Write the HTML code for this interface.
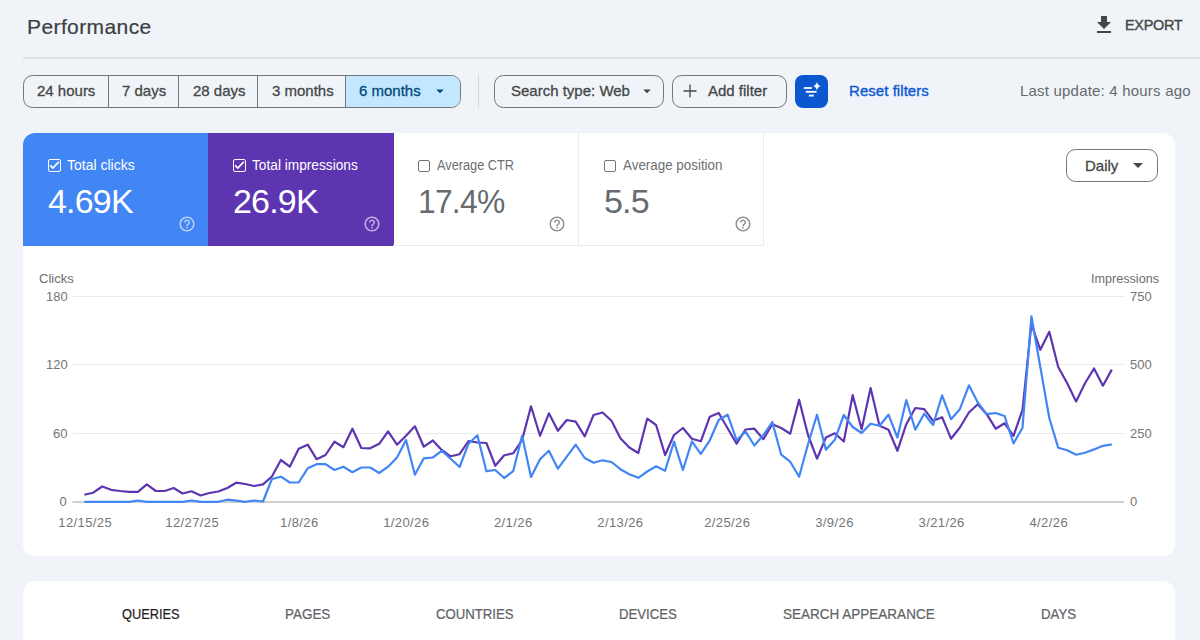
<!DOCTYPE html>
<html>
<head>
<meta charset="utf-8">
<style>
html, body { margin: 0; padding: 0; }
body { width: 1200px; height: 640px; overflow: hidden; position: relative; background: #f0f4f9; font-family: "Liberation Sans", sans-serif; color: #1f1f1f; }
.abs { position: absolute; }
.t { position: absolute; white-space: nowrap; line-height: 1; }
.title { left: 27px; top: 16px; font-size: 21px; letter-spacing: 0.4px; -webkit-text-stroke: 0.2px currentColor; color: #3c4043; }
.export { left: 1125px; top: 17px; font-size: 15.5px; letter-spacing: -0.3px; -webkit-text-stroke: 0.4px currentColor; color: #444746; transform: scaleX(0.93); transform-origin: 0 0; }
.divider { left: 23px; top: 57px; width: 1177px; height: 2px; background: #dde1e5; }
.sg { top: 0; height: 31px; box-sizing: border-box; }
.lbl { -webkit-text-stroke: 0.3px currentColor; }
.sg .lbl { position: absolute; top: 6.6px; font-size: 15px; color: #444746; white-space: nowrap; line-height: 1; }
.btn { top: 75px; height: 33px; box-sizing: border-box; border: 1px solid #747775; border-radius: 9.5px; }
.btn .lbl { position: absolute; top: 6.6px; font-size: 15px; color: #444746; white-space: nowrap; line-height: 1; }
.card { background: #fff; border-radius: 12px; }
.tile { top: 133px; height: 113px; box-sizing: border-box; }
.tile .cb { position: absolute; left: 25px; top: 26px; width: 12.7px; height: 12.9px; box-sizing: border-box; border: 1.5px solid #fff; border-radius: 2px; }
.tile .lab { position: absolute; left: 44px; top: 25.4px; font-size: 14px; white-space: nowrap; line-height: 1; }
.tile .val { position: absolute; left: 25px; top: 50.5px; font-size: 34px; letter-spacing: -0.8px; white-space: nowrap; line-height: 1; }
.tile .help { position: absolute; left: 155px; top: 82.3px; width: 18px; height: 18px; }
.ax { position: absolute; font-size: 13px; color: #757575; white-space: nowrap; line-height: 1; }
.xl { transform: translateX(-50%); letter-spacing: 0.4px; }
.tab { position: absolute; top: 607px; font-size: 14px; -webkit-text-stroke: 0.22px currentColor; transform-origin: 0 0; color: #5f6368; white-space: nowrap; line-height: 1; }
</style>
</head>
<body>
<!-- Header -->
<div class="t title">Performance</div>
<svg class="abs" style="left:1092px;top:12.7px" width="24" height="24" viewBox="0 0 24 24"><path fill="#444746" d="M19 9h-4V3H9v6H5l7 7 7-7zM5 18v2h14v-2H5z"/></svg>
<div class="t export">EXPORT</div>
<div class="abs divider"></div>

<!-- Date range segmented buttons -->
<div class="abs" style="left:23px;top:75px;width:438px;height:33px;box-sizing:border-box;border:1px solid #747775;border-radius:9.5px;overflow:hidden">
  <div class="abs sg" style="left:0;width:84px;"><span class="lbl" style="left:13px">24 hours</span></div>
  <div class="abs sg" style="left:84px;width:70px;border-left:1px solid #747775;"><span class="lbl" style="left:13px">7 days</span></div>
  <div class="abs sg" style="left:154px;width:79px;border-left:1px solid #747775;"><span class="lbl" style="left:14px">28 days</span></div>
  <div class="abs sg" style="left:233px;width:88px;border-left:1px solid #747775;"><span class="lbl" style="left:14px">3 months</span></div>
  <div class="abs sg" style="left:321px;width:117px;border-left:1px solid #747775;background:#c2e7ff;"><span class="lbl" style="left:13px;color:#004a77">6 months</span>
    <svg class="abs" style="left:85px;top:6px" width="18" height="18" viewBox="0 0 24 24"><path fill="#004a77" d="M7 10l5 5 5-5z"/></svg></div>
</div>
<div class="abs" style="left:478px;top:75px;width:1px;height:33px;background:#d3d7dc"></div>

<div class="abs btn" style="left:494px;width:170px;"><span class="lbl" style="left:16px">Search type: Web</span>
  <svg class="abs" style="left:143px;top:6px" width="18" height="18" viewBox="0 0 24 24"><path fill="#444746" d="M7 10l5 5 5-5z"/></svg></div>
<div class="abs btn" style="left:672px;width:115px;"><svg class="abs" style="left:4px;top:2px" width="26" height="26" viewBox="0 0 24 24"><path fill="#444746" d="M18 12.6h-5.4V18h-1.2v-5.4H6v-1.2h5.4V6h1.2v5.4H18z"/></svg><span class="lbl" style="left:35px">Add filter</span></div>
<div class="abs" style="left:795px;top:75px;width:33px;height:33px;border-radius:8px;background:#0b57d0;">
  <svg class="abs" style="left:0;top:0" width="33" height="33" viewBox="0 0 33 33">
    <rect x="8.8" y="12.1" width="8.1" height="1.8" fill="#fff"/>
    <rect x="10.8" y="15.9" width="10.8" height="1.8" fill="#fff"/>
    <rect x="13.9" y="19.7" width="4.8" height="1.8" fill="#fff"/>
    <path fill="#fff" d="M21.9 6.9 Q22.7 10.3 26.0 11.1 Q22.7 11.9 21.9 15.3 Q21.1 11.9 17.8 11.1 Q21.1 10.3 21.9 6.9z"/>
  </svg>
</div>
<div class="t" style="left:849px;top:83.3px;font-size:15px;color:#0b57d0;-webkit-text-stroke:0.35px currentColor;letter-spacing:0.05px">Reset filters</div>
<div class="t" style="left:1020px;top:83.3px;font-size:15px;color:#66696d;letter-spacing:0.2px">Last update: 4 hours ago</div>

<!-- Main card -->
<div class="abs card" style="left:23px;top:133px;width:1152px;height:423px;overflow:hidden">
</div>
<div class="abs tile" style="left:23px;width:186px;background:#4285f4;border-top-left-radius:12px">
  <div class="cb"></div>
  <svg class="abs" style="left:25px;top:26px" width="13" height="13" viewBox="0 0 13 13"><path d="M2.1 6.4 L4.8 9.0 L10.8 2.9" stroke="#fff" stroke-width="1.7" fill="none"/></svg>
  <div class="lab" style="color:#fff">Total clicks</div>
  <div class="val" style="color:#fff">4.69K</div>
  <svg class="help" viewBox="0 0 24 24"><path fill="rgba(255,255,255,0.62)" d="M11 18h2v-2h-2v2zm1-16C6.48 2 2 6.48 2 12s4.48 10 10 10 10-4.48 10-10S17.52 2 12 2zm0 18c-4.41 0-8-3.59-8-8s3.59-8 8-8 8 3.59 8 8-3.59 8-8 8zm0-14c-2.21 0-4 1.79-4 4h2c0-1.1.9-2 2-2s2 .9 2 2c0 2-3 1.75-3 5h2c0-2.25 3-2.5 3-5 0-2.21-1.79-4-4-4z"/></svg>
</div>
<div class="abs tile" style="left:208px;width:186px;background:#5e35b1">
  <div class="cb"></div>
  <svg class="abs" style="left:25px;top:26px" width="13" height="13" viewBox="0 0 13 13"><path d="M2.1 6.4 L4.8 9.0 L10.8 2.9" stroke="#fff" stroke-width="1.7" fill="none"/></svg>
  <div class="lab" style="color:#fff;transform:scaleX(0.978);transform-origin:0 0">Total impressions</div>
  <div class="val" style="color:#fff">26.9K</div>
  <svg class="help" viewBox="0 0 24 24"><path fill="rgba(255,255,255,0.62)" d="M11 18h2v-2h-2v2zm1-16C6.48 2 2 6.48 2 12s4.48 10 10 10 10-4.48 10-10S17.52 2 12 2zm0 18c-4.41 0-8-3.59-8-8s3.59-8 8-8 8 3.59 8 8-3.59 8-8 8zm0-14c-2.21 0-4 1.79-4 4h2c0-1.1.9-2 2-2s2 .9 2 2c0 2-3 1.75-3 5h2c0-2.25 3-2.5 3-5 0-2.21-1.79-4-4-4z"/></svg>
</div>
<div class="abs tile" style="left:393px;width:186px;border-right:1px solid #ebebeb;border-bottom:1px solid #ebebeb">
  <div class="cb" style="border-color:#757575;border-width:1px;width:12.2px;height:12.2px;top:26.5px"></div>
  <div class="lab" style="color:#6c6f73;transform:scaleX(0.91);transform-origin:0 0">Average CTR</div>
  <div class="val" style="color:#676b6f;letter-spacing:-0.8px;transform:scaleX(0.935);transform-origin:0 0">17.4%</div>
  <svg class="help" viewBox="0 0 24 24"><path fill="#8f9296" d="M11 18h2v-2h-2v2zm1-16C6.48 2 2 6.48 2 12s4.48 10 10 10 10-4.48 10-10S17.52 2 12 2zm0 18c-4.41 0-8-3.59-8-8s3.59-8 8-8 8 3.59 8 8-3.59 8-8 8zm0-14c-2.21 0-4 1.79-4 4h2c0-1.1.9-2 2-2s2 .9 2 2c0 2-3 1.75-3 5h2c0-2.25 3-2.5 3-5 0-2.21-1.79-4-4-4z"/></svg>
</div>
<div class="abs tile" style="left:578px;width:186px;border-left:1px solid #ebebeb;border-right:1px solid #ebebeb;border-bottom:1px solid #ebebeb">
  <div class="cb" style="border-color:#757575;border-width:1px;width:12.2px;height:12.2px;top:26.5px"></div>
  <div class="lab" style="color:#6c6f73;transform:scaleX(0.956);transform-origin:0 0">Average position</div>
  <div class="val" style="color:#676b6f">5.5</div>
  <svg class="help" viewBox="0 0 24 24"><path fill="#8f9296" d="M11 18h2v-2h-2v2zm1-16C6.48 2 2 6.48 2 12s4.48 10 10 10 10-4.48 10-10S17.52 2 12 2zm0 18c-4.41 0-8-3.59-8-8s3.59-8 8-8 8 3.59 8 8-3.59 8-8 8zm0-14c-2.21 0-4 1.79-4 4h2c0-1.1.9-2 2-2s2 .9 2 2c0 2-3 1.75-3 5h2c0-2.25 3-2.5 3-5 0-2.21-1.79-4-4-4z"/></svg>
</div>

<!-- Daily dropdown -->
<div class="abs btn" style="left:1066px;top:149px;width:92px;height:33px;"><span class="lbl" style="left:18px;top:7.5px">Daily</span>
  <svg class="abs" style="left:59px;top:3px" width="24" height="24" viewBox="0 0 24 24"><path fill="#444746" d="M7 10l5 5 5-5z"/></svg></div>

<!-- Chart -->
<div class="ax" style="left:39px;top:272px;color:#6b6e72">Clicks</div>
<div class="ax" style="left:1090.5px;top:272px;color:#6b6e72;transform:scaleX(0.97);transform-origin:0 0">Impressions</div>
<svg class="abs" style="left:0;top:0" width="1200" height="640">
  <line x1="72.5" y1="296.5" x2="1124" y2="296.5" stroke="#ebebeb" stroke-width="1"/>
  <line x1="72.5" y1="364.5" x2="1124" y2="364.5" stroke="#ebebeb" stroke-width="1"/>
  <line x1="72.5" y1="433.5" x2="1124" y2="433.5" stroke="#ebebeb" stroke-width="1"/>
  <line x1="72.5" y1="502" x2="1124" y2="502" stroke="#d0d0d0" stroke-width="2"/>
  <polyline fill="none" stroke="#5e35b1" stroke-width="2.2" stroke-linejoin="round" points="84.3,494.8 93.2,492.7 102.2,486.5 111.1,489.8 120.0,491.0 129.0,491.8 137.9,491.8 146.8,484.3 155.8,491.0 164.7,491.0 173.7,488.0 182.6,493.5 191.5,491.3 200.5,495.5 209.4,493.0 218.3,491.5 227.3,488.0 236.2,482.7 245.1,484.0 254.1,486.0 263.0,484.3 271.9,476.5 280.9,460.0 289.8,466.7 298.7,448.7 307.7,444.7 316.6,459.2 325.5,455.0 334.5,441.7 343.4,447.2 352.4,428.7 361.3,448.0 370.2,448.3 379.2,443.8 388.1,431.3 397.0,444.7 406.0,435.8 414.9,426.3 423.8,446.7 432.8,440.5 441.7,450.0 450.6,456.3 459.6,454.2 468.5,441.0 477.4,442.5 486.4,443.0 495.3,465.8 504.2,455.3 513.2,453.3 522.1,440.0 531.0,406.3 540.0,435.8 548.9,413.3 557.9,430.8 566.8,420.0 575.7,421.7 584.7,436.3 593.6,415.0 602.5,412.5 611.5,420.8 620.4,438.3 629.3,447.5 638.3,453.0 647.2,418.7 656.1,425.0 665.1,455.0 674.0,435.0 682.9,428.0 691.9,438.7 700.8,441.3 709.8,416.7 718.7,413.0 727.6,428.3 736.6,443.7 745.5,429.5 754.4,428.7 763.4,439.2 772.3,424.2 781.2,428.0 790.2,433.7 799.1,399.7 808.0,435.0 817.0,458.7 825.9,437.5 834.8,433.3 843.8,441.5 852.7,395.0 861.6,429.2 870.6,388.0 879.5,425.8 888.5,429.7 897.4,450.8 906.3,424.2 915.3,408.0 924.2,409.2 933.1,420.8 942.1,417.2 951.0,438.7 959.9,427.5 968.9,412.5 977.8,404.2 986.7,414.2 995.7,428.7 1004.6,423.3 1013.5,435.8 1022.5,409.8 1031.4,324.0 1040.3,349.8 1049.3,331.8 1058.2,367.0 1067.2,383.2 1076.1,401.4 1085.0,383.2 1094.0,368.5 1102.9,385.7 1111.8,369.6"/>
  <polyline fill="none" stroke="#4285f4" stroke-width="2.2" stroke-linejoin="round" points="84.3,501.8 93.2,501.8 102.2,501.8 111.1,501.8 120.0,501.8 129.0,501.8 137.9,500.5 146.8,501.8 155.8,501.8 164.7,501.8 173.7,501.8 182.6,501.8 191.5,500.5 200.5,501.8 209.4,501.8 218.3,501.8 227.3,499.7 236.2,500.7 245.1,501.8 254.1,500.5 263.0,501.5 271.9,479.0 280.9,476.7 289.8,482.5 298.7,482.5 307.7,468.3 316.6,464.2 325.5,464.2 334.5,470.0 343.4,466.7 352.4,472.2 361.3,467.5 370.2,467.5 379.2,473.0 388.1,466.7 397.0,457.5 406.0,440.0 414.9,474.7 423.8,458.3 432.8,457.5 441.7,450.8 450.6,458.7 459.6,467.0 468.5,443.7 477.4,435.3 486.4,471.2 495.3,470.0 504.2,478.0 513.2,471.2 522.1,435.8 531.0,477.0 540.0,459.2 548.9,450.8 557.9,468.7 566.8,456.7 575.7,444.7 584.7,458.0 593.6,462.8 602.5,460.3 611.5,462.0 620.4,469.2 629.3,474.2 638.3,477.8 647.2,471.5 656.1,466.3 665.1,470.8 674.0,441.7 682.9,470.0 691.9,441.3 700.8,453.8 709.8,440.3 718.7,420.0 727.6,414.7 736.6,440.0 745.5,431.7 754.4,445.5 763.4,435.0 772.3,422.0 781.2,454.7 790.2,461.7 799.1,476.7 808.0,444.2 817.0,414.7 825.9,449.7 834.8,439.8 843.8,415.0 852.7,427.0 861.6,433.0 870.6,423.7 879.5,425.8 888.5,414.7 897.4,437.5 906.3,400.0 915.3,429.7 924.2,413.7 933.1,425.0 942.1,395.3 951.0,419.2 959.9,409.2 968.9,385.3 977.8,402.5 986.7,414.2 995.7,413.0 1004.6,416.0 1013.5,443.5 1022.5,427.7 1031.4,316.3 1040.3,367.0 1049.3,418.0 1058.2,447.7 1067.2,450.2 1076.1,454.7 1085.0,452.7 1094.0,449.4 1102.9,445.8 1111.8,444.4"/>
</svg>
<div class="ax" style="left:46px;top:290px">180</div>
<div class="ax" style="left:46px;top:358px">120</div>
<div class="ax" style="left:53px;top:427px">60</div>
<div class="ax" style="left:59.5px;top:495px">0</div>
<div class="ax" style="left:1130px;top:290px">750</div>
<div class="ax" style="left:1130px;top:358px">500</div>
<div class="ax" style="left:1130px;top:427px">250</div>
<div class="ax" style="left:1130px;top:495px">0</div>

<div class="ax xl" style="left:85.2px;top:516px">12/15/25</div>
<div class="ax xl" style="left:192.2px;top:516px">12/27/25</div>
<div class="ax xl" style="left:299.3px;top:516px">1/8/26</div>
<div class="ax xl" style="left:406.3px;top:516px">1/20/26</div>
<div class="ax xl" style="left:513.25px;top:516px">2/1/26</div>
<div class="ax xl" style="left:620.4px;top:516px">2/13/26</div>
<div class="ax xl" style="left:727.25px;top:516px">2/25/26</div>
<div class="ax xl" style="left:834.5px;top:516px">3/9/26</div>
<div class="ax xl" style="left:941.6px;top:516px">3/21/26</div>
<div class="ax xl" style="left:1048.75px;top:516px">4/2/26</div>

<!-- Tabs card -->
<div class="abs card" style="left:23px;top:581px;width:1152px;height:100px;"></div>
<div class="tab" style="left:122px;color:#1f1f1f;transform:scaleX(0.915)">QUERIES</div>
<div class="tab" style="left:285px;transform:scaleX(0.96)">PAGES</div>
<div class="tab" style="left:436px;transform:scaleX(0.94)">COUNTRIES</div>
<div class="tab" style="left:619px;transform:scaleX(0.94)">DEVICES</div>
<div class="tab" style="left:783px;transform:scaleX(0.965)">SEARCH APPEARANCE</div>
<div class="tab" style="left:1041px;transform:scaleX(0.947)">DAYS</div>
</body>
</html>
